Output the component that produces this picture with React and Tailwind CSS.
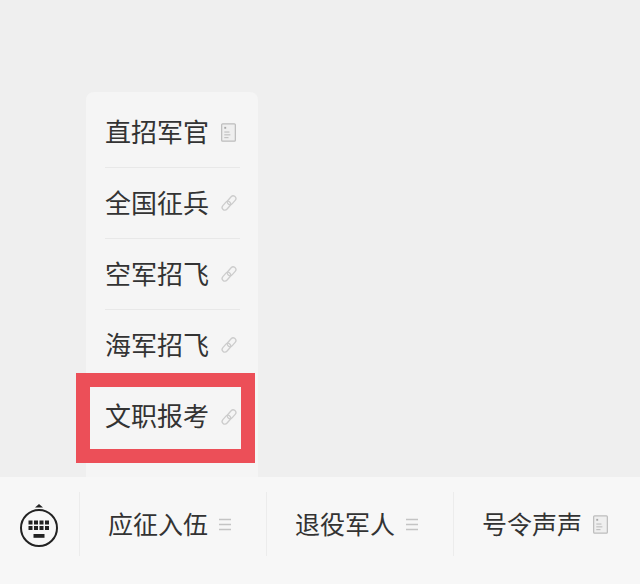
import React from 'react';

const DocIcon = ({ className }) => (
  <svg viewBox="0 0 16 20" className={className} fill="none">
    <rect x="0.7" y="0.7" width="14.6" height="18.6" rx="1" fill="#efefef" stroke="#bdbdbd" strokeWidth="1.3" />
    <rect x="3.5" y="4" width="2" height="2" fill="#a8a8a8" />
    <path d="M3.5 9.5H9M3.5 12.5H10M3.5 15.5H8" stroke="#b5b5b5" strokeWidth="1" />
  </svg>
);

const LinkIcon = ({ className }) => (
  <svg viewBox="0 0 18 18" className={className} fill="none" stroke="#cccccc" strokeWidth="1.3">
    <rect x="6.6" y="3.6" width="10" height="5.4" rx="2.7" transform="rotate(-48 11.6 6.3)" />
    <rect x="1.4" y="9" width="10" height="5.4" rx="2.7" transform="rotate(-48 6.4 11.7)" />
  </svg>
);

const MenuIcon = () => (
  <svg viewBox="0 0 12 13" className="w-[12px] h-[13px]" fill="none" stroke="#c4c4c4" strokeWidth="1.6">
    <path d="M0 1.5H12M0 6.5H12M0 11.5H12" />
  </svg>
);

const KeyboardIcon = () => (
  <svg viewBox="0 0 40 46" className="w-[40px] h-[46px]">
    <path d="M20 1l4 3.6h-8z" fill="#222" />
    <circle cx="20" cy="25" r="18" fill="none" stroke="#222" strokeWidth="2" />
    {[0, 1, 2, 3].map((col) => (
      <React.Fragment key={col}>
        <rect x={9.5 + col * 5.5} y="17.5" width="4" height="4" fill="#222" />
        <rect x={9.5 + col * 5.5} y="23" width="4" height="4" fill="#222" />
      </React.Fragment>
    ))}
    <rect x="14.5" y="31" width="11" height="3.8" fill="#222" />
  </svg>
);

const menuItems = [
  { label: '直招军官', icon: 'doc' },
  { label: '全国征兵', icon: 'link' },
  { label: '空军招飞', icon: 'link' },
  { label: '海军招飞', icon: 'link' },
  { label: '文职报考', icon: 'link' },
];

const tabs = [
  { label: '应征入伍', icon: 'menu' },
  { label: '退役军人', icon: 'menu' },
  { label: '号令声声', icon: 'doc' },
];

export default function App() {
  return (
    <div
      className="w-[640px] h-[584px] flex flex-col bg-[#efefef] overflow-hidden"
      style={{ fontFamily: '"Noto Sans CJK SC", sans-serif' }}
    >
      <div className="flex-1 pt-[92px] pl-[86px]">
        <div className="relative w-[172px] h-[385px] bg-[#f5f5f5] rounded-t-lg pl-[19px] pr-[18px] pt-[5px]">
          {menuItems.map((item, i) => (
            <div
              key={item.label}
              className={`h-[71px] flex items-center justify-between ${i < menuItems.length - 1 ? 'border-b border-[#e8e8e8]' : ''}`}
            >
              <span className="text-[26px] leading-none text-[#333] -mt-[3px]">{item.label}</span>
              {item.icon === 'doc' ? (
                <DocIcon className="w-[15px] h-[19px] mr-[4px]" />
              ) : (
                <LinkIcon className="w-[18px] h-[18px] mr-[2px]" />
              )}
            </div>
          ))}
          <div className="absolute left-[-10px] top-[281px] w-[179px] h-[90px] border-[14px] border-[#ec4f58]" />
        </div>
      </div>

      <div className="h-[107px] bg-[#f7f7f7] flex items-start pt-[15px]">
        <div className="w-[79px] h-[64px] flex items-center justify-center pt-[3px] pr-[1px]">
          <KeyboardIcon />
        </div>
        {tabs.map((tab) => (
          <div
            key={tab.label}
            className="w-[187px] h-[64px] border-l border-[#ececec] flex items-center gap-[11px] pl-[28px]"
          >
            <span className="text-[25px] leading-none text-[#333] -mt-[2px]">{tab.label}</span>
            {tab.icon === 'doc' ? <DocIcon className="w-[15px] h-[19px]" /> : <MenuIcon />}
          </div>
        ))}
      </div>
    </div>
  );
}
